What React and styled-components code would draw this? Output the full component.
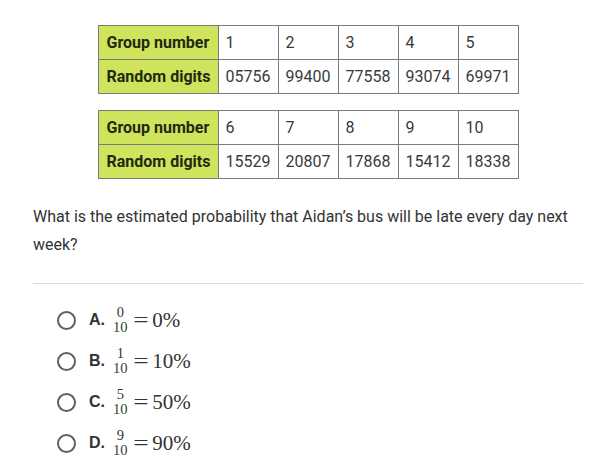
import React from "react";
import styled, { createGlobalStyle } from "styled-components";

const Global = createGlobalStyle`
  html, body { margin: 0; padding: 0; background: #fff; }
  body { font-family: Roboto, "Liberation Sans", sans-serif; }
`;

const Page = styled.div`
  width: 550px;
  padding: 25px 23px 0 33px;
  display: flex;
  flex-direction: column;
`;

const Tables = styled.div`
  display: flex;
  flex-direction: column;
  align-items: center;
  gap: 16px;
`;

const Table = styled.table`
  border-collapse: collapse;
  font-size: 16px;
  color: #333;
`;

const HeadCell = styled.th`
  background: #d0e35c;
  border: 1px solid #7a7a7a;
  width: 120px;
  height: 34px;
  padding: 0 0 0 8px;
  text-align: left;
  font-weight: 700;
  color: #1f2a10;
  box-sizing: border-box;
`;

const Cell = styled.td`
  border: 1px solid #7a7a7a;
  width: 60px;
  height: 34px;
  padding: 0 0 0 7px;
  box-sizing: border-box;
  color: #3a3a3a;
`;

const Question = styled.p`
  margin: 24px 0 0;
  font-size: 16px;
  line-height: 28px;
  color: #333;
`;

const Divider = styled.hr`
  margin: 24px 0 0;
  border: 0;
  border-top: 1px solid #dcdcdc;
`;

const Options = styled.div`
  display: flex;
  flex-direction: column;
  gap: 11px;
  padding: 21px 0 0 24px;
`;

const Option = styled.label`
  display: flex;
  align-items: center;
  height: 30px;
`;

const Radio = styled.span`
  width: 19px;
  height: 19px;
  box-sizing: border-box;
  border: 2px solid #5f5f5f;
  border-radius: 50%;
  flex: none;
`;

const Letter = styled.span`
  font-family: "Liberation Sans", Arial, sans-serif;
  font-weight: 700;
  font-size: 16px;
  color: #333;
  margin-left: 13px;
  width: 24px;
`;

const Frac = styled.span`
  display: inline-flex;
  flex-direction: column;
  align-items: center;
  font-family: "Liberation Serif", "DejaVu Serif", serif;
  font-size: 14.5px;
  line-height: 15px;
  color: #333;
`;

const Den = styled.span`
  color: #2f3f2a;
`;

const MathText = styled.span`
  font-family: "Liberation Serif", "DejaVu Serif", serif;
  font-size: 21px;
  color: #333;
`;

const Eq = styled(MathText)`
  margin: 0 6px 0 7px;
  transform: scaleX(1.3);
`;

const groups = [
  { nums: ["1", "2", "3", "4", "5"], digits: ["05756", "99400", "77558", "93074", "69971"] },
  { nums: ["6", "7", "8", "9", "10"], digits: ["15529", "20807", "17868", "15412", "18338"] },
];

const options = [
  { l: "A.", n: "0", v: "0%" },
  { l: "B.", n: "1", v: "10%" },
  { l: "C.", n: "5", v: "50%" },
  { l: "D.", n: "9", v: "90%" },
];

export default function App() {
  return (
    <>
      <Global />
      <Page>
        <Tables>
          {groups.map((g, i) => (
            <Table key={i}>
              <tbody>
                <tr>
                  <HeadCell>Group number</HeadCell>
                  {g.nums.map((n) => (
                    <Cell key={n}>{n}</Cell>
                  ))}
                </tr>
                <tr>
                  <HeadCell>Random digits</HeadCell>
                  {g.digits.map((d) => (
                    <Cell key={d}>{d}</Cell>
                  ))}
                </tr>
              </tbody>
            </Table>
          ))}
        </Tables>
        <Question>
          What is the estimated probability that Aidan’s bus will be late every day next week?
        </Question>
        <Divider />
        <Options>
          {options.map((o) => (
            <Option key={o.l}>
              <Radio />
              <Letter>{o.l}</Letter>
              <Frac>
                <span>{o.n}</span>
                <Den>10</Den>
              </Frac>
              <Eq>=</Eq>
              <MathText>{o.v}</MathText>
            </Option>
          ))}
        </Options>
      </Page>
    </>
  );
}
